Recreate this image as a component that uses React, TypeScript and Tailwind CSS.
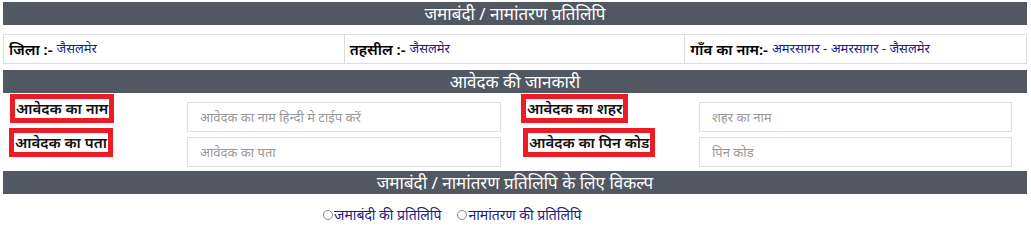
import React from "react";

const font = { fontFamily: '"Noto Sans", "Liberation Sans", sans-serif' };

function Header({ children }: { children: React.ReactNode }) {
  return (
    <div className="h-[23px] bg-[#515862] text-white text-[17px] leading-[23px] text-center">
      {children}
    </div>
  );
}

function Label({ children }: { children: React.ReactNode }) {
  return (
    <span className="inline-block border-[5px] border-[#ed1c24] px-[1px] h-[29px] leading-[18px] text-[15px] font-semibold text-[#111]">
      {children}
    </span>
  );
}

function Input({ placeholder }: { placeholder: string }) {
  return (
    <input
      className="block w-full h-[30px] border border-[#dddddd] px-[12px] text-[13px] text-[#555] placeholder:text-[#999] outline-none"
      placeholder={placeholder}
      style={font}
    />
  );
}

export default function App() {
  return (
    <div className="w-[1031px] h-[224px] bg-white overflow-hidden" style={font}>
      <div className="mx-[3px] w-[1024px] pt-[2px]">
        <Header>जमाबंदी / नामांतरण प्रतिलिपि</Header>
        <div className="mt-[9px] h-[30px] border border-[#dddddd] grid grid-cols-3 text-[15px]">
          <div className="px-[5px] flex items-center border-r border-[#dddddd]">
            <span className="font-semibold text-black">जिला :-</span>
            <span className="ml-[4px] text-[13px] text-[#1b1b8a]">जैसलमेर</span>
          </div>
          <div className="px-[5px] flex items-center border-r border-[#dddddd]">
            <span className="font-semibold text-black">तहसील :-</span>
            <span className="ml-[4px] text-[13px] text-[#1b1b8a]">जैसलमेर</span>
          </div>
          <div className="px-[5px] flex items-center">
            <span className="font-semibold text-black">गाँव का नाम:-</span>
            <span className="ml-[4px] text-[13px] text-[#1b1b8a]">अमरसागर - अमरसागर - जैसलमेर</span>
          </div>
        </div>
        <div className="mt-[6px]">
          <Header>आवेदक की जानकारी</Header>
        </div>
        <div className="flex mt-[1px]">
          <div className="w-[512px] flex">
            <div className="w-[184px] pl-[7px] flex flex-col gap-[5px]">
              <div><Label>आवेदक का नाम</Label></div>
              <div className="-ml-[1px]"><Label>आवेदक का पता</Label></div>
            </div>
            <div className="w-[314px] flex flex-col gap-[5px] pt-[8px]">
              <Input placeholder="आवेदक का नाम हिन्दी मे टाईप करें" />
              <Input placeholder="आवेदक का पता" />
            </div>
          </div>
          <div className="w-[512px] flex">
            <div className="w-[184px] pl-[6px] flex flex-col gap-[5px]">
              <div><Label>आवेदक का शहर</Label></div>
              <div className="ml-[2px]"><Label>आवेदक का पिन कोड</Label></div>
            </div>
            <div className="w-[313px] flex flex-col gap-[5px] pt-[8px]">
              <Input placeholder="शहर का नाम" />
              <Input placeholder="पिन कोड" />
            </div>
          </div>
        </div>
        <div className="mt-[4px]">
          <Header>जमाबंदी / नामांतरण प्रतिलिपि के लिए विकल्प</Header>
        </div>
        <div className="pl-[320px] pt-[10px] flex items-center text-[14px] text-[#1b1b8a]">
          <label className="flex items-center">
            <span className="inline-block w-[10px] h-[10px] rounded-full border border-[#888] mr-[1px]"></span>
            जमाबंदी की प्रतिलिपि
          </label>
          <label className="flex items-center ml-[16px]">
            <span className="inline-block w-[10px] h-[10px] rounded-full border border-[#888] mr-[1px]"></span>
            नामांतरण की प्रतिलिपि
          </label>
        </div>
      </div>
    </div>
  );
}
